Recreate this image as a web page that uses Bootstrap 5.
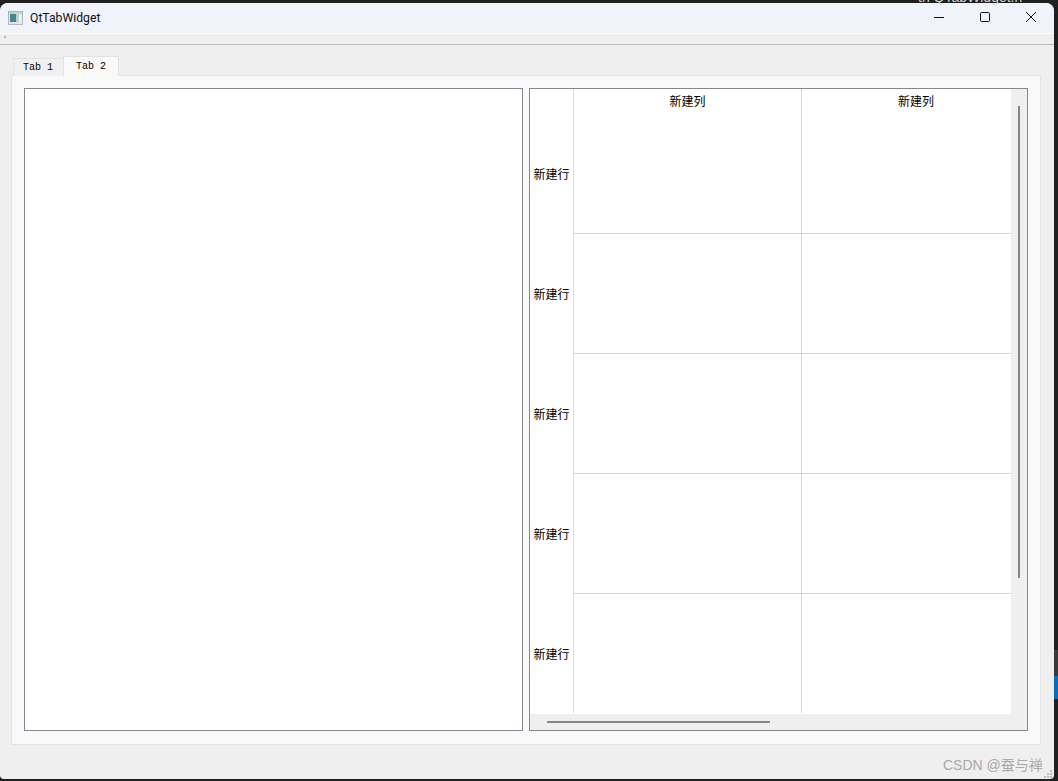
<!DOCTYPE html>
<html lang="zh">
<head>
<meta charset="utf-8">
<title>QtTabWidget</title>
<link rel="stylesheet" href="https://cdn.jsdelivr.net/npm/bootstrap@5.3.0/dist/css/bootstrap.min.css">
<style>
html,body{height:100%;margin:0;}
body{background:#202020;overflow:hidden;font-family:"Noto Sans CJK SC",sans-serif;color:#000;}
.desk{width:1058px;height:781px;position:relative;padding:3px 4px 2px 0;}
.cut-text{position:absolute;left:918px;top:-10px;font:14px/14px "Liberation Sans",sans-serif;color:#cdd3dc;}
.side-blue{position:absolute;right:0;top:676px;width:4px;height:23px;background:#0f6cb8;}
.side-grey{position:absolute;right:0;top:650px;width:4px;height:26px;background:#3a3a3a;}
.app-win{width:1054px;height:776px;background:#efefef;border-radius:8px 8px 4px 4px;overflow:hidden;}
.title-bar{height:31px;background:#f0f3f9;padding-left:8px;border-bottom:1px solid #fbfbfb;flex:none;}
.title-text{font:12.2px/16px "Roboto",sans-serif;color:#111;margin-left:7px;}
.win-btn{width:46px;height:28px;}
.menu-strip{height:11px;border-bottom:1px solid #bcbcbc;flex:none;position:relative;}
.grip-dot{position:absolute;left:4px;top:2px;width:2px;height:2px;background:#b5b5b5;}
.tab-area{padding:11px 13px 0 11px;}
.tab-strip{padding-left:2px;height:20px;align-items:flex-end;position:relative;z-index:1;}
.qt-tab{font:10px/12px "Liberation Mono",monospace;color:#000;}
.qt-tab1{width:51px;height:18px;background:#f0f0f0;border:1px solid #e3e3e3;border-bottom:0;padding:3px 0 0 9px;}
.qt-tab2{width:56px;height:20px;background:#f9f9f9;border:1px solid #e3e3e3;border-bottom:0;padding:4px 0 0 12px;margin-left:-1px;}
.tab-pane-box{height:670px;background:#f9f9f9;border:1px solid #e3e3e3;margin-top:-1px;padding:12px;gap:6px;}
.view-box{width:499px;height:643px;background:#fff;border:1px solid #868692;}
.table-body{height:625px;width:481px;}
.row-head{width:44px;height:624px;overflow:hidden;border-right:1px solid #dedede;flex:none;font-size:12px;}
.row-cell{height:120px;padding-top:2px;}
.row-first{height:144px;padding-top:26px;}
.row-cell,.row-first{display:flex;align-items:center;justify-content:center;}
.cols{flex:none;height:624px;overflow:hidden;}
.col-a{width:228px;border-right:1px solid #d6d6d6;flex:none;}
.col-b{width:228px;flex:none;}
.col-head{height:25px;font-size:12px;line-height:24px;text-align:center;}
.grid-first{height:120px;border-bottom:1px solid #d6d6d6;}
.grid-row{height:120px;border-bottom:1px solid #d6d6d6;}
.grid-last{height:119px;}
.vbar{width:16px;background:#efefef;flex:none;padding:17px 0 0 7px;}
.vthumb{width:2px;height:472px;background:#868686;}
.hbar-row{height:16px;background:#efefef;padding:7px 0 0 17px;}
.hthumb{width:223px;height:2px;background:#868686;}
.mark-text{position:absolute;left:943px;top:756px;font:14px/18px "Liberation Sans","Noto Sans CJK SC",sans-serif;color:#a9a9a9;}
.size-grip{position:absolute;left:1043px;top:769px;}
</style>
</head>
<body>
<div class="desk">
  <div class="cut-text">th QTabWidget.h</div>
  <div class="side-grey"></div>
  <div class="side-blue"></div>
  <div class="app-win d-flex flex-column">
    <div class="title-bar d-flex align-items-center">
      <svg width="15" height="14" viewBox="0 0 15 14"><rect x=".5" y=".5" width="14" height="13" fill="#e4e6ea" stroke="#b4b6bc"/><rect x="1" y="1" width="13" height="2" fill="#c9ccd2"/><rect x="2" y="3" width="6" height="8" fill="#3f8a8c"/><rect x="8" y="3" width="3" height="8" fill="#b9d2cf"/><rect x="11" y="3" width="2" height="8" fill="#f3f5f4"/></svg>
      <span class="title-text">QtTabWidget</span>
      <div class="ms-auto d-flex align-self-start">
        <div class="win-btn d-flex align-items-center justify-content-center"><svg width="12" height="12" viewBox="0 0 12 12"><path d="M1 6.5h10" stroke="#111" fill="none"/></svg></div>
        <div class="win-btn d-flex align-items-center justify-content-center"><svg width="12" height="12" viewBox="0 0 12 12"><rect x="1.5" y="1.5" width="9" height="9" rx="1.2" stroke="#111" fill="none"/></svg></div>
        <div class="win-btn d-flex align-items-center justify-content-center"><svg width="12" height="12" viewBox="0 0 12 12"><path d="M1 1l10 10M11 1L1 11" stroke="#111" fill="none"/></svg></div>
      </div>
    </div>
    <div class="menu-strip"><span class="grip-dot"></span></div>
    <div class="tab-area">
      <div class="tab-strip d-flex">
        <div class="qt-tab qt-tab1">Tab 1</div>
        <div class="qt-tab qt-tab2">Tab 2</div>
      </div>
      <div class="tab-pane-box d-flex">
        <div class="view-box"></div>
        <div class="view-box d-flex flex-column">
          <div class="d-flex">
            <div class="table-body d-flex overflow-hidden">
              <div class="row-head">
                <div class="row-first">新建行</div>
                <div class="row-cell">新建行</div>
                <div class="row-cell">新建行</div>
                <div class="row-cell">新建行</div>
                <div class="row-cell">新建行</div>
              </div>
              <div class="cols d-flex">
                <div class="col-a">
                  <div class="col-head">新建列</div>
                  <div class="grid-first"></div><div class="grid-row"></div><div class="grid-row"></div><div class="grid-row"></div><div class="grid-last"></div>
                </div>
                <div class="col-b">
                  <div class="col-head">新建列</div>
                  <div class="grid-first"></div><div class="grid-row"></div><div class="grid-row"></div><div class="grid-row"></div><div class="grid-last"></div>
                </div>
              </div>
            </div>
            <div class="vbar"><div class="vthumb"></div></div>
          </div>
          <div class="hbar-row flex-grow-1"><div class="hthumb"></div></div>
        </div>
      </div>
    </div>
  </div>
  <div class="mark-text">CSDN @蚕与禅</div>
  <svg class="size-grip" width="10" height="10" viewBox="0 0 10 10" fill="#bdbdbd"><rect x="7" y="1" width="2" height="2"/><rect x="4" y="4" width="2" height="2"/><rect x="7" y="4" width="2" height="2"/><rect x="1" y="7" width="2" height="2"/><rect x="4" y="7" width="2" height="2"/><rect x="7" y="7" width="2" height="2"/></svg>
</div>
</body>
</html>
